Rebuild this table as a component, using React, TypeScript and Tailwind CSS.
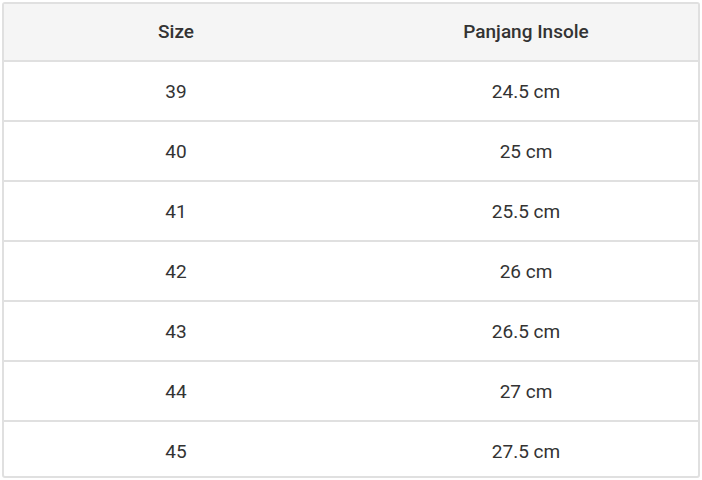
const rows = [
  ["39", "24.5 cm"],
  ["40", "25 cm"],
  ["41", "25.5 cm"],
  ["42", "26 cm"],
  ["43", "26.5 cm"],
  ["44", "27 cm"],
  ["45", "27.5 cm"],
];

const App = () => {
  return (
    <div className="w-[702px] h-[480px] bg-white p-[2px] font-['Roboto',sans-serif] text-[#333]">
      <div className="w-[698px] h-[476px] border-2 border-[#e0e0e0] rounded-[3px] overflow-hidden">
        <table className="w-[700px] table-fixed border-collapse text-[19px]">
          <colgroup>
            <col className="w-[344px]" />
            <col className="w-[356px]" />
          </colgroup>
          <thead>
            <tr className="bg-[#f5f5f5] border-b-2 border-[#e0e0e0]">
              <th className="h-[57px] font-medium text-center">Size</th>
              <th className="h-[57px] font-medium text-center">Panjang Insole</th>
            </tr>
          </thead>
          <tbody>
            {rows.map(([size, length]) => (
              <tr key={size} className="border-b-2 border-[#e0e0e0]">
                <td className="h-[60px] pt-[2px] text-center">{size}</td>
                <td className="h-[60px] pt-[2px] text-center">{length}</td>
              </tr>
            ))}
          </tbody>
        </table>
      </div>
    </div>
  );
};

export default App;
